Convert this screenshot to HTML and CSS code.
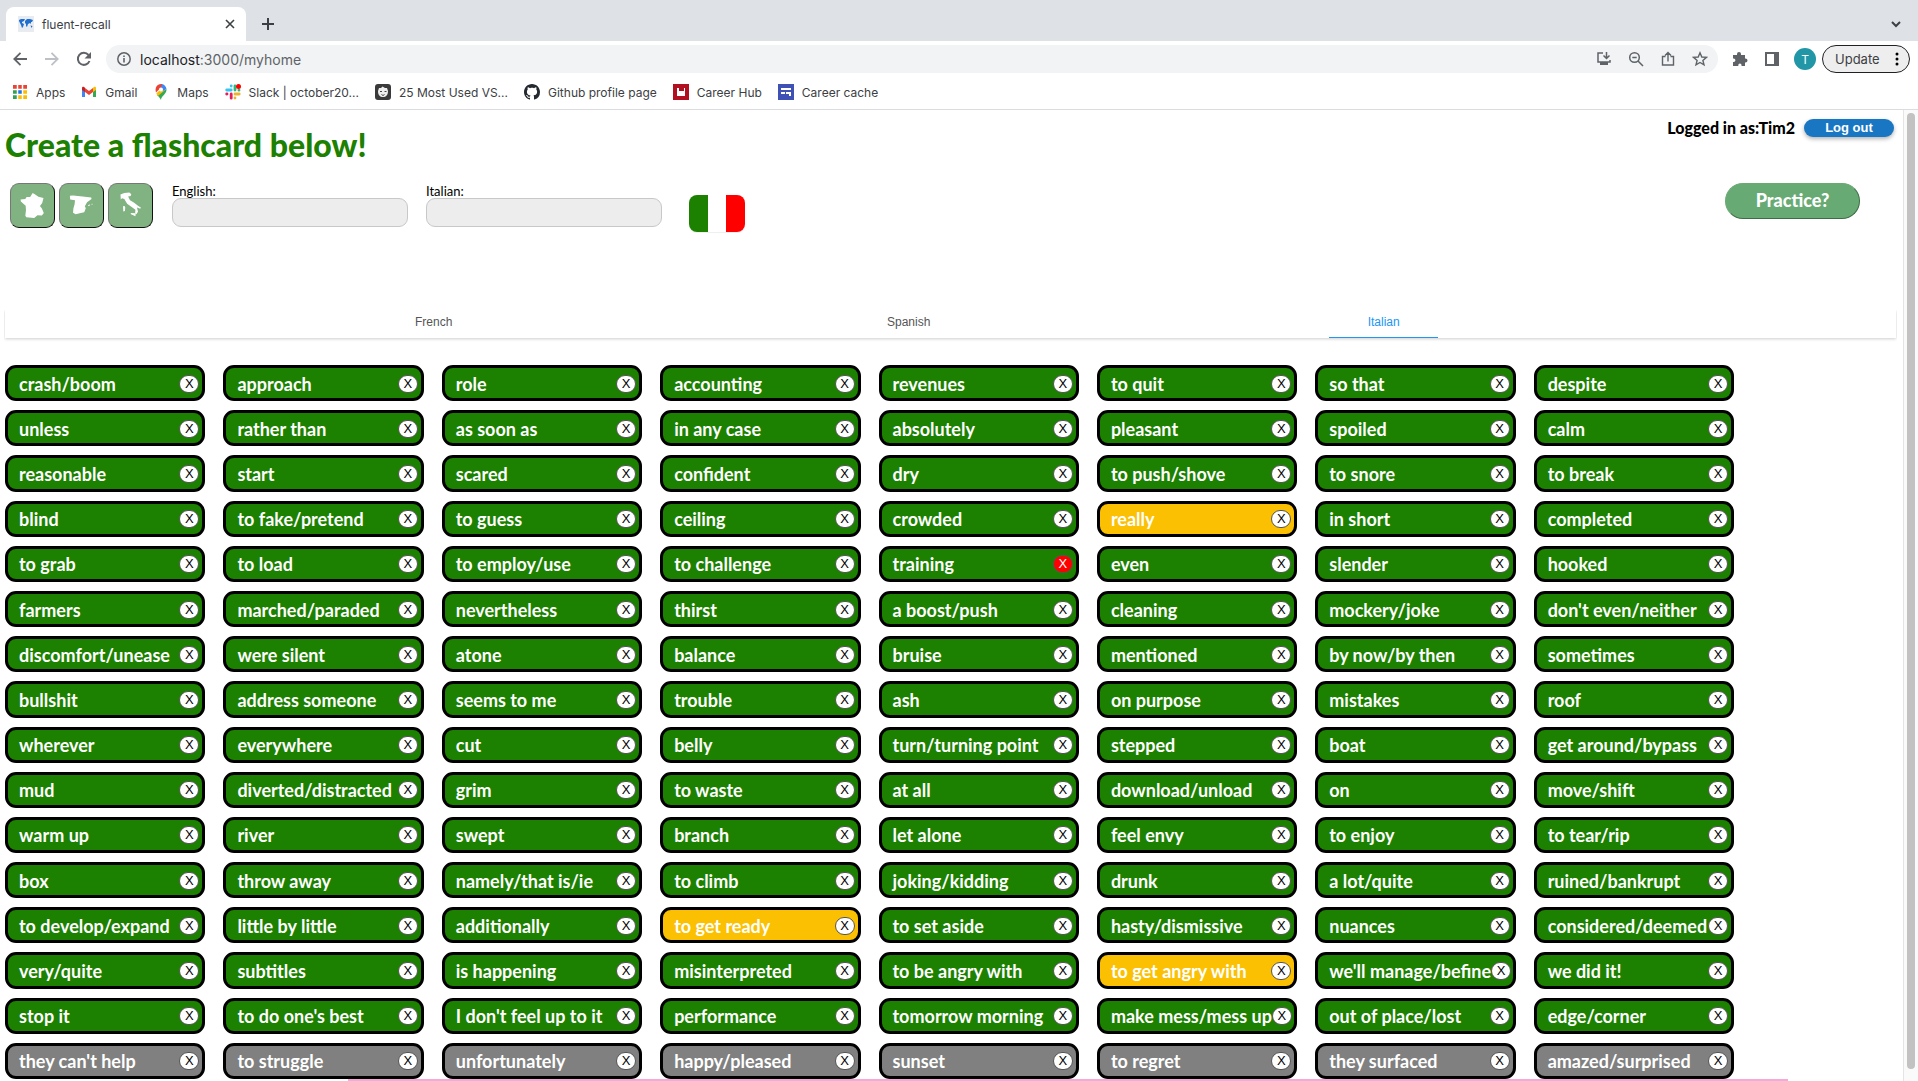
FILE: index.html
```html
<!DOCTYPE html>
<html lang="en">
<head>
<meta charset="utf-8">
<title>fluent-recall</title>
<link rel="stylesheet" href="styles.css">
</head>
<body>
<header class="browser">
  <div class="tab-strip">
    <div class="tab">
      <svg class="tab-icon" viewBox="0 0 16 16"><rect width="16" height="16" fill="#e8ebef"/><path fill="#1f6fd0" d="M1 4l2-1 4 0-1 2-2 1 0 1 2 1-1 3-1 1-1-3-1-2-1-2zM7 5l2-2 3 0 3 1-1 2-1 0 0 2-1-1-2 1-1 3-1-1 0-2-1-1zM12.500 9.500l2 .5-1 2z"/></svg>
      <span class="tab-title">fluent-recall</span>
      <button class="bare" aria-label="Close tab"><svg width="10" height="10" viewBox="0 0 10 10" fill="none" stroke="#3c4043" stroke-width="1.6"><path d="M1 1l8 8M9 1l-8 8"/></svg></button>
    </div>
    <button class="bare new-tab" aria-label="New tab"><svg width="12" height="12" viewBox="0 0 12 12" fill="none" stroke="#3c4043" stroke-width="2"><path d="M6 0v12M0 6h12"/></svg></button>
    <button class="bare tab-search" aria-label="Search tabs"><svg width="10" height="7" viewBox="0 0 10 7" fill="none" stroke="#3c4043" stroke-width="2"><path d="M1 1l4 4 4-4"/></svg></button>
  </div>
  <div class="toolbar">
    <button class="bare" aria-label="Back"><svg width="14" height="14" viewBox="0 0 14 14" fill="none" stroke="#5f6368" stroke-width="1.8"><path d="M14 7H1.500M7.500 .8L1.300 7l6.200 6.200"/></svg></button>
    <button class="bare" aria-label="Forward"><svg width="14" height="14" viewBox="0 0 14 14" fill="none" stroke="#bdc1c6" stroke-width="1.8"><path d="M0 7h12.500M6.500 .8L12.700 7l-6.200 6.200"/></svg></button>
    <button class="bare" aria-label="Reload"><svg width="16" height="16" viewBox="0 0 16 16"><path fill="none" stroke="#5f6368" stroke-width="2" d="M13.500 10A6 6 0 1 1 12.500 4"/><path fill="#5f6368" d="M15 1v6.500H8.500z"/></svg></button>
    <div class="omnibox">
      <svg width="14" height="14" viewBox="0 0 14 14"><circle cx="7" cy="7" r="6.200" fill="none" stroke="#5f6368" stroke-width="1.500"/><path fill="#5f6368" d="M6.200 6h1.600v4.500H6.200zM6.200 3.500h1.600V5H6.200z"/></svg>
      <span class="url">localhost<span class="path">:3000/myhome</span></span>
      <button class="bare" aria-label="Install app"><svg width="16" height="16" viewBox="0 0 16 16"><path fill="none" stroke="#5f6368" stroke-width="1.500" d="M7 2H2v9h12V9M10.500 1v6M7.500 4.500l3 3 3-3"/><path fill="#5f6368" d="M4 11h8v3H4z"/></svg></button>
      <button class="bare" aria-label="Zoom"><svg width="16" height="16" viewBox="0 0 16 16" fill="none" stroke="#5f6368" stroke-width="1.500"><circle cx="6.500" cy="6.500" r="4.800"/><path d="M10 10l5 5M4.300 6.500h4.400"/></svg></button>
      <button class="bare" aria-label="Share"><svg width="16" height="16" viewBox="0 0 16 16" fill="none" stroke="#5f6368" stroke-width="1.400"><path d="M5.500 5.500h-3V14h11V5.500h-3M8 10.500V1.500M5 4.500l3-3 3 3"/></svg></button>
      <button class="bare" aria-label="Bookmark"><svg width="16" height="16" viewBox="0 0 16 16" fill="none" stroke="#5f6368" stroke-width="1.400"><path d="M8 1.800l1.800 4.200 4.600.4-3.500 3 1.100 4.500L8 11.500l-4 2.400 1.100-4.500-3.500-3 4.600-.4z"/></svg></button>
    </div>
    <button class="bare" aria-label="Extensions"><svg width="16" height="16" viewBox="0 0 16 16"><path fill="#5f6368" d="M1 4h4V3a2 2 0 0 1 4 0v1h4v3.500h.5a2 2 0 0 1 0 4H13V15H9.500v-1a1.600 1.600 0 0 0-3.200 0v1H1v-4h.7a1.700 1.700 0 0 0 0-3.400H1z"/></svg></button>
    <button class="bare" aria-label="Side panel"><svg width="14" height="14" viewBox="0 0 14 14"><path fill="#5f6368" fill-rule="evenodd" d="M0 0h14v14H0zM2 2v10h7V2z"/></svg></button>
    <button class="avatar">T</button>
    <button class="update">Update<svg width="4" height="14" viewBox="0 0 4 14"><circle cx="2" cy="2" r="1.500"/><circle cx="2" cy="7" r="1.500"/><circle cx="2" cy="12" r="1.500"/></svg></button>
  </div>
  <nav class="bookmarks">
    <a href="#"><svg viewBox="0 0 16 16"><path fill="#ea4335" d="M1 1h4v4H1zM6 1h4v4H6zM11 1h4v4h-4z"/><path fill="#34a053" d="M1 6h4v4H1zM1 11h4v4H1z"/><path fill="#1a73e8" d="M6 6h4v4H6z"/><path fill="#fbbc04" d="M11 6h4v4h-4zM6 11h4v4H6zM11 11h4v4h-4z"/><path stroke="#fff" stroke-width="1.500" d="M5.500 0v16M10.500 0v16M0 5.500h16M0 10.500h16"/></svg>Apps</a>
    <a href="#"><svg viewBox="0 0 16 16"><path fill="#4285f4" d="M1 4v9h3V7z"/><path fill="#34a853" d="M15 4v9h-3V7z"/><path fill="#ea4335" d="M4 4l4 3 4-3v4l-4 3-4-3z"/><path fill="#c5221f" d="M1 4c0-1.500 2-2 3 0v4L1 6z"/><path fill="#fbbc04" d="M15 4c0-1.500-2-2-3 0v4l3-2z"/></svg>Gmail</a>
    <a href="#"><svg viewBox="0 0 16 16"><path fill="#34a853" d="M8 16c0-4 6-6 5.500-11L4 11c2 2 3 3 4 5z"/><path fill="#fbbc04" d="M3.300 9.500L9 4l2 3-6.200 5z"/><path fill="#4285f4" d="M8 0c3 0 5 2 5.500 5L10 7 7 4z"/><path fill="#ea4335" d="M8 0C4 0 1.500 4 3 8.500l5-5L9 .1z"/><circle cx="8" cy="5.500" r="2" fill="#fff"/></svg>Maps</a>
    <a href="#"><svg viewBox="0 0 16 16" fill="none" stroke-width="2.800" stroke-linecap="round"><path stroke="#36c5f0" d="M1.700 6h4.500M6.200 1.800v.2"/><path stroke="#2eb67d" d="M10 2v4M13.900 6.200h.1"/><path stroke="#ecb22e" d="M10 10h4.200M10 13.900v.2"/><path stroke="#e01e5a" d="M6.200 10v4.200M1.700 10h.3"/><circle cx="13.500" cy="2.500" r="2.500" fill="#f00" stroke="none"/></svg>Slack | october20...</a>
    <a href="#"><svg viewBox="0 0 16 16"><rect width="16" height="16" rx="3" fill="#3a3a3a"/><path fill="#eee" d="M4 4l2 0 1.500-1.500L10 4h2l1 3c0 4-2 6-5 6s-5-2-5-6z"/><path stroke="#444" fill="none" d="M5 7.500h2M9.500 7.500h2M6.500 10.500l1.500 1 1.500-1"/></svg>25 Most Used VS...</a>
    <a href="#"><svg viewBox="0 0 16 16"><path fill="#24292f" d="M8 0C3.580 0 0 3.580 0 8c0 3.540 2.290 6.530 5.470 7.590.4.070.55-.17.55-.38 0-.19-.01-.82-.01-1.490-2.010.37-2.530-.49-2.690-.94-.09-.23-.48-.94-.82-1.130-.28-.15-.68-.52-.01-.53.63-.01 1.080.58 1.230.82.72 1.210 1.870.87 2.330.66.07-.52.28-.87.51-1.070-1.780-.2-3.640-.89-3.640-3.950 0-.87.31-1.590.82-2.150-.08-.2-.36-1.020.08-2.120 0 0 .67-.21 2.200.82.64-.18 1.320-.27 2-.27s1.360.09 2 .27c1.530-1.040 2.200-.82 2.200-.82.44 1.100.16 1.920.08 2.120.51.56.82 1.270.82 2.150 0 3.070-1.870 3.750-3.650 3.950.29.25.54.73.54 1.480 0 1.070-.01 1.930-.01 2.200 0 .21.15.46.55.38A8.010 8.010 0 0 0 16 8c0-4.420-3.580-8-8-8z"/></svg>Github profile page</a>
    <a href="#"><svg viewBox="0 0 16 16"><path fill="#b01020" d="M0 0h16v16H0z"/><path fill="#fff" d="M4 4h2v3h5V4h1v8H4z"/></svg>Career Hub</a>
    <a href="#"><svg viewBox="0 0 16 16"><path fill="#3f51b5" d="M0 0h16v16H0z"/><path fill="#fff" d="M3 4h10v2H3zM3 8h4v2H3zM8 8h5v4h-2v-2H8z"/></svg>Career cache</a>
  </nav>
</header>

<div class="viewport">
<main class="page">
  <div class="top">
    <h1>Create a flashcard below!</h1>
    <div class="account">
      <span>Logged in as:Tim2</span>
      <button class="logout">Log out</button>
    </div>
  </div>

  <form class="creator">
    <div class="countries">
      <button type="button" class="country" aria-label="French"><svg viewBox="0 0 135 135"><path d="M68 28l8 5 10 7 16 4-4 16-7 9 6 8 6 14-6 8-14-1-10 9-25-3-3-4 2-18-1-14-15-13-1-6 15-2 4-6h11z"/></svg></button>
      <button type="button" class="country" aria-label="Spanish"><svg viewBox="0 0 135 135"><path d="M31 37l10-1 30 3 27 3 1 5-14 10-7 13 3 6-5 13-14 3-13 3-8-5 1-13 4-14 1-12-15-2zM88 67l5-3 2 2-5 4zM97 63l5-1v3z"/></svg></button>
      <button type="button" class="country" aria-label="Italian"><svg viewBox="0 0 135 135"><path d="M36 33l12-5 16-1 6 5-2 6-8 1 6 12 12 7 14 11 8 5-2 4-10-4 3 13-5 8-4-5 1-9-14-10-12-9-9-15-7-2-4 4zM44 70l5-1 2 5-1 11-5 1zM68 91l16 1-1 9-14-6z"/></svg></button>
    </div>
    <div class="field"><label for="english">English:</label><input id="english" type="text"></div>
    <div class="field"><label for="italian">Italian:</label><input id="italian" type="text"></div>
    <div class="flag" role="img" aria-label="Italian flag"></div>
    <button type="button" class="practice">Practice?</button>
  </form>

  <nav class="languages">
    <a href="#">French</a>
    <a href="#">Spanish</a>
    <a href="#" class="current">Italian</a>
  </nav>

  <ul class="cards">
    <li class="card">crash/boom<button>X</button></li>
    <li class="card">approach<button>X</button></li>
    <li class="card">role<button>X</button></li>
    <li class="card">accounting<button>X</button></li>
    <li class="card">revenues<button>X</button></li>
    <li class="card">to quit<button>X</button></li>
    <li class="card">so that<button>X</button></li>
    <li class="card">despite<button>X</button></li>
    <li class="card">unless<button>X</button></li>
    <li class="card">rather than<button>X</button></li>
    <li class="card">as soon as<button>X</button></li>
    <li class="card">in any case<button>X</button></li>
    <li class="card">absolutely<button>X</button></li>
    <li class="card">pleasant<button>X</button></li>
    <li class="card">spoiled<button>X</button></li>
    <li class="card">calm<button>X</button></li>
    <li class="card">reasonable<button>X</button></li>
    <li class="card">start<button>X</button></li>
    <li class="card">scared<button>X</button></li>
    <li class="card">confident<button>X</button></li>
    <li class="card">dry<button>X</button></li>
    <li class="card">to push/shove<button>X</button></li>
    <li class="card">to snore<button>X</button></li>
    <li class="card">to break<button>X</button></li>
    <li class="card">blind<button>X</button></li>
    <li class="card">to fake/pretend<button>X</button></li>
    <li class="card">to guess<button>X</button></li>
    <li class="card">ceiling<button>X</button></li>
    <li class="card">crowded<button>X</button></li>
    <li class="card learning">really<button>X</button></li>
    <li class="card">in short<button>X</button></li>
    <li class="card">completed<button>X</button></li>
    <li class="card">to grab<button>X</button></li>
    <li class="card">to load<button>X</button></li>
    <li class="card">to employ/use<button>X</button></li>
    <li class="card">to challenge<button>X</button></li>
    <li class="card">training<button class="active">X</button></li>
    <li class="card">even<button>X</button></li>
    <li class="card">slender<button>X</button></li>
    <li class="card">hooked<button>X</button></li>
    <li class="card">farmers<button>X</button></li>
    <li class="card">marched/paraded<button>X</button></li>
    <li class="card">nevertheless<button>X</button></li>
    <li class="card">thirst<button>X</button></li>
    <li class="card">a boost/push<button>X</button></li>
    <li class="card">cleaning<button>X</button></li>
    <li class="card">mockery/joke<button>X</button></li>
    <li class="card">don't even/neither<button>X</button></li>
    <li class="card">discomfort/unease<button>X</button></li>
    <li class="card">were silent<button>X</button></li>
    <li class="card">atone<button>X</button></li>
    <li class="card">balance<button>X</button></li>
    <li class="card">bruise<button>X</button></li>
    <li class="card">mentioned<button>X</button></li>
    <li class="card">by now/by then<button>X</button></li>
    <li class="card">sometimes<button>X</button></li>
    <li class="card">bullshit<button>X</button></li>
    <li class="card">address someone<button>X</button></li>
    <li class="card">seems to me<button>X</button></li>
    <li class="card">trouble<button>X</button></li>
    <li class="card">ash<button>X</button></li>
    <li class="card">on purpose<button>X</button></li>
    <li class="card">mistakes<button>X</button></li>
    <li class="card">roof<button>X</button></li>
    <li class="card">wherever<button>X</button></li>
    <li class="card">everywhere<button>X</button></li>
    <li class="card">cut<button>X</button></li>
    <li class="card">belly<button>X</button></li>
    <li class="card">turn/turning point<button>X</button></li>
    <li class="card">stepped<button>X</button></li>
    <li class="card">boat<button>X</button></li>
    <li class="card">get around/bypass<button>X</button></li>
    <li class="card">mud<button>X</button></li>
    <li class="card">diverted/distracted<button>X</button></li>
    <li class="card">grim<button>X</button></li>
    <li class="card">to waste<button>X</button></li>
    <li class="card">at all<button>X</button></li>
    <li class="card">download/unload<button>X</button></li>
    <li class="card">on<button>X</button></li>
    <li class="card">move/shift<button>X</button></li>
    <li class="card">warm up<button>X</button></li>
    <li class="card">river<button>X</button></li>
    <li class="card">swept<button>X</button></li>
    <li class="card">branch<button>X</button></li>
    <li class="card">let alone<button>X</button></li>
    <li class="card">feel envy<button>X</button></li>
    <li class="card">to enjoy<button>X</button></li>
    <li class="card">to tear/rip<button>X</button></li>
    <li class="card">box<button>X</button></li>
    <li class="card">throw away<button>X</button></li>
    <li class="card">namely/that is/ie<button>X</button></li>
    <li class="card">to climb<button>X</button></li>
    <li class="card">joking/kidding<button>X</button></li>
    <li class="card">drunk<button>X</button></li>
    <li class="card">a lot/quite<button>X</button></li>
    <li class="card">ruined/bankrupt<button>X</button></li>
    <li class="card">to develop/expand<button>X</button></li>
    <li class="card">little by little<button>X</button></li>
    <li class="card">additionally<button>X</button></li>
    <li class="card learning">to get ready<button>X</button></li>
    <li class="card">to set aside<button>X</button></li>
    <li class="card">hasty/dismissive<button>X</button></li>
    <li class="card">nuances<button>X</button></li>
    <li class="card">considered/deemed<button>X</button></li>
    <li class="card">very/quite<button>X</button></li>
    <li class="card">subtitles<button>X</button></li>
    <li class="card">is happening<button>X</button></li>
    <li class="card">misinterpreted<button>X</button></li>
    <li class="card">to be angry with<button>X</button></li>
    <li class="card learning">to get angry with<button>X</button></li>
    <li class="card">we'll manage/befine<button>X</button></li>
    <li class="card">we did it!<button>X</button></li>
    <li class="card">stop it<button>X</button></li>
    <li class="card">to do one's best<button>X</button></li>
    <li class="card">I don't feel up to it<button>X</button></li>
    <li class="card">performance<button>X</button></li>
    <li class="card">tomorrow morning<button>X</button></li>
    <li class="card">make mess/mess up<button>X</button></li>
    <li class="card">out of place/lost<button>X</button></li>
    <li class="card">edge/corner<button>X</button></li>
    <li class="card unseen">they can't help<button>X</button></li>
    <li class="card unseen">to struggle<button>X</button></li>
    <li class="card unseen">unfortunately<button>X</button></li>
    <li class="card unseen">happy/pleased<button>X</button></li>
    <li class="card unseen">sunset<button>X</button></li>
    <li class="card unseen">to regret<button>X</button></li>
    <li class="card unseen">they surfaced<button>X</button></li>
    <li class="card unseen">amazed/surprised<button>X</button></li>
  </ul>
  <div class="progress"></div>
</main>
<div class="scrollbar"><div class="thumb"></div></div>
</div>
</body>
</html>
```
FILE: styles.css
```css
* { box-sizing: border-box; }

body {
  margin: 0;
  min-height: 100vh;
  display: flex;
  flex-direction: column;
  background: #fff;
  color: #000;
  font-family: Lato, "Gill Sans", sans-serif;
}

button { font: inherit; padding: 0; cursor: pointer; }
a { color: inherit; text-decoration: none; }
svg { display: block; flex: none; }

.bare {
  display: flex;
  align-items: center;
  justify-content: center;
  width: 16px;
  height: 16px;
  border: 0;
  background: none;
}

/* Browser frame */
.browser { font-family: Inter, Roboto, sans-serif; font-size: 12px; color: #3c4043; }

.tab-strip {
  display: flex;
  align-items: center;
  height: 41px;
  padding: 7px 14px 0 6px;
  background: #dee1e6;
}
.tab {
  display: flex;
  align-items: center;
  gap: 8px;
  width: 240px;
  height: 34px;
  padding: 0 8px 0 12px;
  border-radius: 8px 8px 0 0;
  background: #fff;
}
.tab-icon { width: 16px; height: 16px; }
.tab-title { flex: 1; }
.new-tab { margin-left: 14px; }
.tab-search { margin-left: auto; }

.toolbar {
  display: flex;
  align-items: center;
  gap: 16px;
  height: 36px;
  padding: 0 8px 0 12px;
}
.omnibox {
  flex: 1;
  display: flex;
  align-items: center;
  gap: 16px;
  height: 28px;
  margin-right: -2px;
  margin-left: -2px;
  padding: 0 10px 0 11px;
  border-radius: 14px;
  background: #f1f3f4;
}
.url { flex: 1; margin-left: -7px; font-size: 14px; color: #202124; }
.path { color: #5f6368; }
.avatar {
  width: 22px;
  height: 22px;
  margin-left: -2px;
  border: 0;
  border-radius: 50%;
  background: #2196a6;
  color: #fff;
}
.update {
  display: flex;
  align-items: center;
  justify-content: space-between;
  width: 88px;
  height: 28px;
  margin-left: -10px;
  padding: 0 10px 0 12px;
  border: 1px solid #202124;
  border-radius: 14px;
  background: #eee;
  color: #3c4043;
  font-size: 13px;
}

.bookmarks {
  display: flex;
  align-items: center;
  gap: 16px;
  height: 33px;
  padding: 0 12px 2px;
  border-bottom: 1px solid #dadce0;
}
.bookmarks a { display: flex; align-items: center; gap: 8px; white-space: nowrap; }
.bookmarks svg { width: 16px; height: 16px; }

/* Page */
.viewport { flex: 1; display: flex; }
.page { flex: 1; display: flex; flex-direction: column; padding: 0 7px 0 5px; }
.scrollbar {
  width: 15px;
  padding: 3px 2px 12px 3px;
  border-left: 1px solid #e4e4e4;
  background: #fafafa;
}
.thumb { width: 8px; height: 100%; border-radius: 4px; background: #c2c2c2; }

.top { display: flex; justify-content: space-between; height: 73px; }
h1 {
  margin: 17px 0 0;
  color: #1c8000;
  font-family: "Lato Black", Lato, "Gill Sans", sans-serif;
  font-size: 32px;
  line-height: 36px;
  font-weight: 900;
}
.account {
  display: flex;
  align-items: center;
  gap: 9px;
  height: 35px;
  padding-right: 2px;
  font-family: "Lato Black", Lato, "Gill Sans", sans-serif;
  font-size: 16px;
  font-weight: 900;
}
.logout {
  width: 90px;
  height: 18px;
  border: 0;
  border-radius: 9px;
  background: #1976c2;
  box-shadow: 0 2px 4px rgba(0, 0, 0, .3);
  color: #fff;
  font: bold 13px/18px "Liberation Sans", Arial, sans-serif;
}

.creator { display: flex; align-items: flex-start; height: 127px; }
.countries { display: flex; gap: 4px; padding: 0 19px 0 5px; }
.country {
  width: 45px;
  height: 45px;
  border: 1px solid;
  border-color: #777 #111 #111 #777;
  border-radius: 9px;
  background: #81b281;
}
.country svg { width: 100%; height: 100%; fill: #fff; }
.field { width: 236px; margin-right: 18px; }
.field label { display: block; height: 15px; font-size: 13px; line-height: 16px; }
.field input {
  display: block;
  width: 100%;
  height: 29px;
  padding: 0 10px;
  border: 1px solid #c8c8c8;
  border-radius: 9px;
  background: #ededed;
}
.flag {
  width: 56px;
  height: 37px;
  margin: 12px 0 0 9px;
  border-radius: 8px;
  background: linear-gradient(90deg, #1c8000 19px, #fff 19px 37px, #f00 37px);
  box-shadow: 0 1px 1px #eee;
}
.practice {
  width: 135px;
  height: 36px;
  margin: 0 36px 0 auto;
  padding-bottom: 2px;
  border: 1px solid;
  border-color: #68aa74 #3c6e46 #3c6e46 #68aa74;
  border-radius: 18px;
  background: #68aa74;
  color: #fff;
  font-family: "Lato Black", Lato, "Gill Sans", sans-serif;
  font-size: 18px;
  font-weight: 900;
}

.languages {
  display: flex;
  justify-content: space-between;
  height: 28px;
  padding: 0 calc(24% + 4px) 0 calc(20% - 4px);
  box-shadow: 0 1px 3px rgba(0, 0, 0, .2);
  clip-path: inset(0 -1px -4px -1px);
  color: #555;
  font: 12px/24px "Liberation Sans", Arial, sans-serif;
}
.languages a { width: 109px; text-align: center; border-bottom: 1px solid transparent; }
.languages .current { color: #2196f3; border-color: #2196f3; }

.cards {
  flex: 1;
  display: grid;
  grid-template-columns: repeat(8, minmax(0, 1fr));
  grid-auto-rows: minmax(36px, 1fr);
  gap: 9px 18px;
  margin: 27px 0 0;
  padding: 0 162px 0 0;
  list-style: none;
}
.card {
  display: flex;
  align-items: center;
  justify-content: space-between;
  padding: 1px 3px 0 11px;
  border: 3px solid #000;
  border-radius: 11px;
  background: #1c8000;
  color: #fff;
  font-size: 18px;
  font-weight: 700;
  line-height: 24px;
  white-space: nowrap;
}
.card button {
  flex: none;
  width: 20px;
  height: 18px;
  border: 1px solid #555;
  border-radius: 9px;
  background: #fff;
  color: #000;
  font: 13px/16px "Liberation Sans", Arial, sans-serif;
}
.card .active { background: #f00; color: #fff; }
.learning { background: #fcc002; }
.unseen { background: #808080; }

.progress { height: 2px; margin: 0 108px 0 343px; background: #f3aadb; }
```
